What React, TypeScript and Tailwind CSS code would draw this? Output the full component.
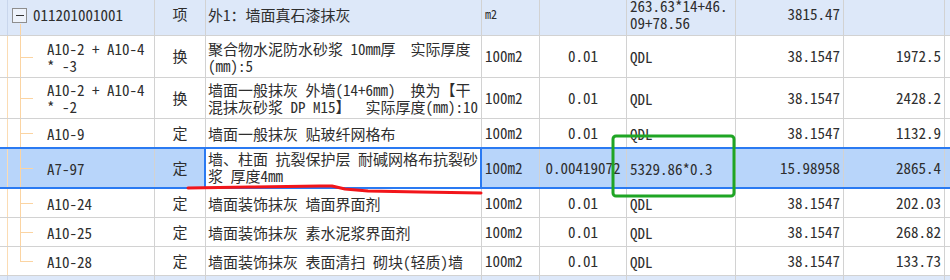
import React from "react";

type Row = {
  code: string[];
  type: string;
  name: string[];
  unit: string;
  qty: string;
  expr: string[];
  v1: string;
  v2: string;
  h: number;
  head?: boolean;
  selected?: boolean;
  last?: boolean;
};

const rows: Row[] = [
  { code: ["011201001001"], type: "项", name: ["外1：墙面真石漆抹灰"], unit: "m2", qty: "", expr: ["263.63*14+46.", "09+78.56"], v1: "3815.47", v2: "", h: 43, head: true },
  { code: ["A10-2 + A10-4", "* -3"], type: "换", name: ["聚合物水泥防水砂浆 10mm厚  实际厚度", "(mm):5"], unit: "100m2", qty: "0.01", expr: ["QDL"], v1: "38.1547", v2: "1972.5", h: 42 },
  { code: ["A10-2 + A10-4", "* -2"], type: "换", name: ["墙面一般抹灰 外墙(14+6mm)  换为【干", "混抹灰砂浆 DP M15】  实际厚度(mm):10"], unit: "100m2", qty: "0.01", expr: ["QDL"], v1: "38.1547", v2: "2428.2", h: 41 },
  { code: ["A10-9"], type: "定", name: ["墙面一般抹灰 贴玻纤网格布"], unit: "100m2", qty: "0.01", expr: ["QDL"], v1: "38.1547", v2: "1132.9", h: 29 },
  { code: ["A7-97"], type: "定", name: ["墙、柱面 抗裂保护层 耐碱网格布抗裂砂", "浆 厚度4mm"], unit: "100m2", qty: "0.00419072", expr: ["5329.86*0.3"], v1: "15.98958", v2: "2865.4", h: 41, selected: true },
  { code: ["A10-24"], type: "定", name: ["墙面装饰抹灰 墙面界面剂"], unit: "100m2", qty: "0.01", expr: ["QDL"], v1: "38.1547", v2: "202.03", h: 29 },
  { code: ["A10-25"], type: "定", name: ["墙面装饰抹灰 素水泥浆界面剂"], unit: "100m2", qty: "0.01", expr: ["QDL"], v1: "38.1547", v2: "268.82", h: 29 },
  { code: ["A10-28"], type: "定", name: ["墙面装饰抹灰 表面清扫 砌块(轻质)墙"], unit: "100m2", qty: "0.01", expr: ["QDL"], v1: "38.1547", v2: "133.73", h: 29, last: true },
];

const cell = "border-r border-b border-[#d2d2d2] overflow-hidden flex flex-col justify-center";

function Lines({ lines }: { lines: string[] }) {
  return (
    <>
      {lines.map((l, i) => (
        <div key={i} className="whitespace-pre leading-[17px]">
          {l}
        </div>
      ))}
    </>
  );
}

function CodeCell({ row }: { row: Row }) {
  if (row.head) {
    return (
      <div className={`${cell} relative pl-[33px]`}>
        <div className="absolute left-[7px] top-0 -bottom-px w-px bg-[#c9d6ec]" />
        <div className="absolute left-[20px] top-[31px] -bottom-px w-px bg-[#fbd4a2]" />
        <div className="absolute left-[12px] top-[15px] w-[15px] h-[15px] border border-[#8e8e8e] bg-[#eef3fb] flex items-center justify-center">
          <div className="w-[8px] h-px bg-[#333]" />
        </div>
        <Lines lines={row.code} />
      </div>
    );
  }
  return (
    <div className={`${cell} relative pl-[47px]`}>
      <div className="absolute left-[7px] top-0 -bottom-px w-px bg-[#fbdcb4]" />
      <div className={`absolute left-[20px] top-0 w-px bg-[#fbd4a2] ${row.last ? "h-1/2" : "-bottom-px"}`} />
      <div className="absolute left-[20px] top-1/2 w-[13px] h-px bg-[#fbd4a2]" />
      <Lines lines={row.code} />
    </div>
  );
}

function TableRow({ row }: { row: Row }) {
  const bg = row.head ? "bg-[#dde8f9]" : row.selected ? "bg-[#b8d5fa]" : "bg-white";
  return (
    <div
      className={`relative grid grid-cols-[155px_51px_276px_58px_87px_109px_108px_101px_5px] ${bg}`}
      style={{ height: row.h }}
    >
      <CodeCell row={row} />
      <div className={`${cell} items-center`}>{row.type}</div>
      <div className={`${cell} pl-[2px] ${row.selected ? "bg-white justify-start pt-[2px]" : ""}`}>
        <Lines lines={row.name} />
      </div>
      <div className={`${cell} pl-[3px] ${row.head ? "text-[12px]" : ""}`}>{row.unit}</div>
      <div className={`${cell} items-center`}>
        <span className="whitespace-pre">{row.qty}</span>
      </div>
      <div className={`${cell} pl-[3px]`}>
        <Lines lines={row.expr} />
      </div>
      <div className={`${cell} items-end pr-[3px]`}>{row.v1}</div>
      <div className={`${cell} items-end pr-[3px]`}>{row.v2}</div>
      <div className="border-b border-[#d2d2d2]" />
      {row.selected && (
        <>
          <div className="absolute left-0 right-0 top-[-1px] h-[2px] bg-[#2a7af2]" />
          <div className="absolute left-0 right-0 bottom-0 h-[2px] bg-[#2a7af2]" />
          <div className="absolute left-[204px] w-[278px] top-[-1px] bottom-0 border-x-2 border-[#2a7af2]" />
        </>
      )}
    </div>
  );
}

export default function App() {
  return (
    <div
      className="relative w-[950px] h-[280px] overflow-hidden bg-white text-[15px] text-[#2e2e2e]"
      style={{ fontFamily: '"Noto Sans Mono CJK SC", "Noto Sans CJK SC", monospace' }}
    >
      <div className="mt-[-7px]">
        {rows.map((r, i) => (
          <TableRow key={i} row={r} />
        ))}
        <div className="grid grid-cols-[155px_51px_276px_58px_87px_109px_108px_101px_5px] h-[30px] bg-[#dde8f9]">
          <div className="relative border-r border-[#d2d2d2]">
            <div className="absolute left-[7px] top-0 bottom-0 w-px bg-[#c9d6ec]" />
          </div>
          <div className="border-r border-[#d2d2d2]" />
          <div className="border-r border-[#d2d2d2]" />
          <div className="border-r border-[#d2d2d2]" />
          <div className="border-r border-[#d2d2d2]" />
          <div className="border-r border-[#d2d2d2]" />
          <div className="border-r border-[#d2d2d2]" />
          <div className="border-r border-[#d2d2d2]" />
          <div />
        </div>
      </div>
      <svg className="absolute left-0 top-0 pointer-events-none" width="950" height="280">
        <rect x="613" y="136" width="121" height="60" rx="3" fill="none" stroke="#1fa524" strokeWidth="3" />
        <polyline
          points="188,188 250,187 320,186 332,186 345,189 368,191 420,192 481,193"
          fill="none"
          stroke="#f2151a"
          strokeWidth="3"
          strokeLinecap="round"
          strokeLinejoin="round"
        />
      </svg>
    </div>
  );
}
